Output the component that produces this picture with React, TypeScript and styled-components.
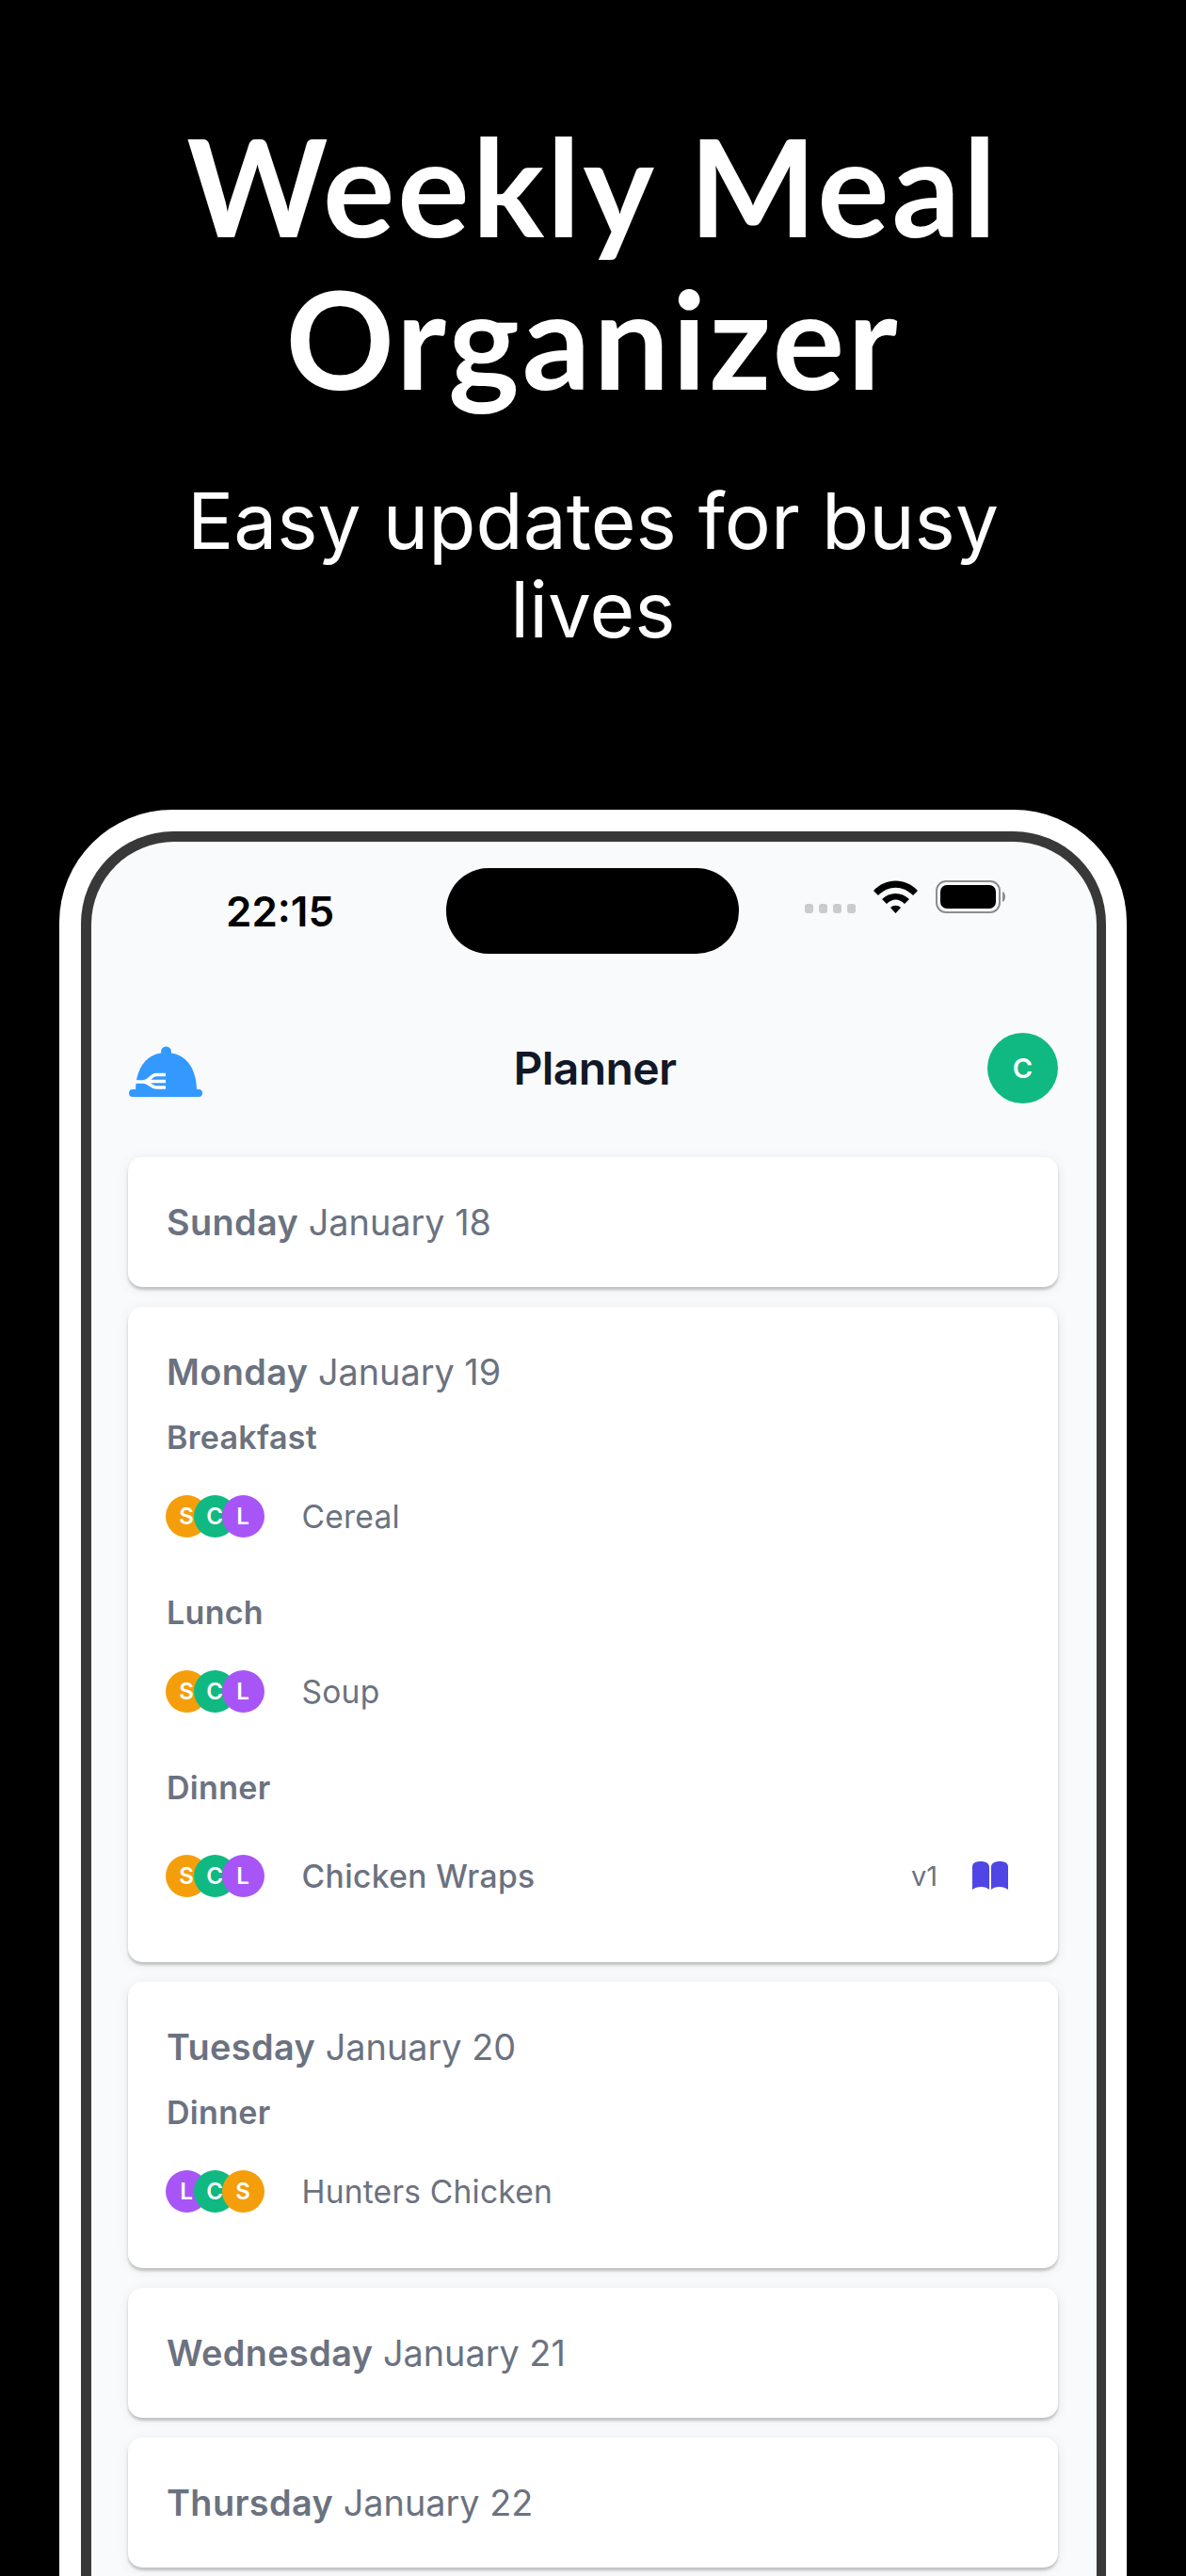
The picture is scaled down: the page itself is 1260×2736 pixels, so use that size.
import styled, { createGlobalStyle } from "styled-components";

const GlobalStyle = createGlobalStyle`
    html, body {
        margin: 0;
        padding: 0;
        background: #000;
    }
`;

const STPage = styled.div`
    width: 1260px;
    height: 2736px;
    overflow: hidden;
    background: #000;
    display: flex;
    flex-direction: column;
    align-items: center;
`;

const STHeadline = styled.h1`
    margin: 116px 0 0;
    width: 1000px;
    text-align: center;
    font-family: Lato, sans-serif;
    font-weight: 700;
    font-size: 143px;
    line-height: 162px;
    letter-spacing: 3px;
    color: #fff;
`;

const STSubline = styled.h2`
    margin: 67px 0 0;
    width: 900px;
    text-align: center;
    font-family: Inter, sans-serif;
    font-weight: 400;
    font-size: 82px;
    line-height: 94px;
    color: #fff;
`;

const STPhone = styled.div`
    width: 1134px;
    margin-top: 165px;
    flex-shrink: 0;
    padding: 23px 22px 0 23px;
    box-sizing: border-box;
    background: #fff;
    border-radius: 120px 120px 0 0;
`;

const STBezel = styled.div`
    padding: 11px 10px 0 11px;
    background: #383838;
    border-radius: 98px 98px 0 0;
`;

const STScreen = styled.div`
    background: #f9fafb;
    border-radius: 88px 88px 0 0;
    padding-bottom: 200px;
    font-family: Inter, sans-serif;
`;

const STStatusBar = styled.div`
    display: grid;
    grid-template-columns: 377px 311px 1fr;
    align-items: center;
    padding-top: 28px;
`;

const STTime = styled.span`
    padding-left: 143px;
    font-family: Inter, sans-serif;
    font-size: 44px;
    font-weight: 600;
    line-height: 50px;
    color: #000;
`;

const STIsland = styled.div`
    height: 91px;
    background: #000;
    border-radius: 45px;
`;

const STStatusIcons = styled.div`
    display: flex;
    justify-content: flex-end;
    align-items: flex-end;
    padding: 0 94px 30px 0;
`;

const STDots = styled.div`
    display: flex;
    gap: 6px;
    margin-right: 19px;
`;

const STDot = styled.span`
    width: 9px;
    height: 10px;
    border-radius: 3px;
    background: #cbcbcb;
`;

const STWifi = styled.svg`
    display: block;
    width: 47px;
    height: 35px;
    margin-right: 19px;
`;

const STBattery = styled.svg`
    display: block;
    width: 77px;
    height: 35px;
`;

const STTopBar = styled.div`
    display: flex;
    align-items: center;
    justify-content: space-between;
    height: 75px;
    margin: 84px 41px 57px 40px;
`;

const STLogo = styled.svg`
    display: block;
    width: 78px;
    height: 54px;
    margin-top: 6px;
`;

const STTopTitle = styled.span`
    font-size: 48px;
    font-weight: 600;
    letter-spacing: -0.6px;
    color: #111827;
`;

const STProfile = styled.div`
    width: 75px;
    height: 75px;
    border-radius: 50%;
    background: #10b981;
    color: #fff;
    display: flex;
    align-items: center;
    justify-content: center;
    font-size: 29px;
    font-weight: 600;
`;

const STCards = styled.div`
    display: flex;
    flex-direction: column;
    gap: 21px;
    margin: 0 41px 0 39px;
`;

const STCard = styled.div`
    background: #fff;
    border-radius: 15px;
    padding: 42px 42px 42px 41px;
    box-shadow: 0 3px 3px rgba(0, 0, 0, 0.2), 0 2px 14px rgba(0, 0, 0, 0.07);
`;

const STDayTitle = styled.div`
    font-size: 37.8px;
    line-height: 54px;
    font-weight: 400;
    color: #6b7280;
`;

const STDayName = styled.span`
    font-weight: 600;
    letter-spacing: 0.4px;
`;

const STMeal = styled.div`
    margin-top: 18px;
    & + & {
        margin-top: 38px;
    }
`;

const STMealLabel = styled.div`
    font-size: 34px;
    line-height: 50px;
    font-weight: 600;
    letter-spacing: 0.3px;
    color: #6b7280;
`;

const STMealRow = styled.div<{ $tall?: boolean }>`
    display: flex;
    align-items: center;
    height: ${p => (p.$tall ? 100 : 80)}px;
    margin: 18px 11px 0 -1.5px;
`;

const STAvatars = styled.div`
    display: flex;
    margin-right: 40px;
`;

const STAvatar = styled.span<{ $color: string }>`
    width: 45px;
    height: 45px;
    border-radius: 50%;
    background: ${p => p.$color};
    color: #fff;
    display: flex;
    align-items: center;
    justify-content: center;
    font-size: 24px;
    font-weight: 600;
    & + & {
        margin-left: -15px;
    }
`;

const STDish = styled.span<{ $link?: boolean }>`
    font-size: 33.6px;
    font-weight: ${p => (p.$link ? 500 : 400)};
    letter-spacing: ${p => (p.$link ? 0.4 : 0.2)}px;
    color: #6b7280;
`;

const STVersion = styled.span`
    margin-left: auto;
    margin-right: 37px;
    font-size: 29px;
    color: #6b7280;
`;

const STBook = styled.svg`
    display: block;
    width: 38px;
    height: 30px;
`;

const PEOPLE: Record<string, string> = {
    S: "#f59e0b",
    C: "#10b981",
    L: "#a855f7",
};

interface IMeal {
    label: string,
    people: string,
    dish: string,
    version?: string,
};

interface IDay {
    name: string,
    date: string,
    meals: IMeal[],
};

const DAYS: IDay[] = [
    { name: "Sunday", date: "January 18", meals: [] },
    {
        name: "Monday",
        date: "January 19",
        meals: [
            { label: "Breakfast", people: "SCL", dish: "Cereal" },
            { label: "Lunch", people: "SCL", dish: "Soup" },
            { label: "Dinner", people: "SCL", dish: "Chicken Wraps", version: "v1" },
        ],
    },
    {
        name: "Tuesday",
        date: "January 20",
        meals: [{ label: "Dinner", people: "LCS", dish: "Hunters Chicken" }],
    },
    { name: "Wednesday", date: "January 21", meals: [] },
    { name: "Thursday", date: "January 22", meals: [] },
];

const App = (): JSX.Element => {
    return <STPage>
        <GlobalStyle />
        <STHeadline>Weekly Meal Organizer</STHeadline>
        <STSubline>Easy updates for busy lives</STSubline>
        <STPhone>
            <STBezel>
                <STScreen>
                    <STStatusBar>
                        <STTime>22:15</STTime>
                        <STIsland />
                        <STStatusIcons>
                            <STDots>
                                {[0, 1, 2, 3].map(i => <STDot key={i} />)}
                            </STDots>
                            <STWifi viewBox="0 0 47 35">
                                <path d="M0 11 C13 -3 34 -3 47 11 L42 16 C31 5 16 5 5 16 Z" fill="#000" />
                                <path d="M9 20 C17 12 30 12 38 20 L33 25 C27 19 20 19 14 25 Z" fill="#000" />
                                <path d="M18 29 C21 26 26 26 29 29 L23.5 35 Z" fill="#000" />
                            </STWifi>
                            <STBattery viewBox="0 0 77 35">
                                <rect x="1" y="1" width="67" height="33" rx="10" fill="none" stroke="#8e8e8e" strokeWidth="2" />
                                <rect x="5" y="5" width="59" height="25" rx="7" fill="#000" />
                                <path d="M71 12 C75 13 75 22 71 23 Z" fill="#8e8e8e" />
                            </STBattery>
                        </STStatusIcons>
                    </STStatusBar>
                    <STTopBar>
                        <STLogo viewBox="0 0 78 54">
                            <circle cx="39.5" cy="6" r="5.5" fill="#3399ff" />
                            <path d="M7 48 C7 22 20 7 39.5 7 C59 7 72 22 72 48 Z" fill="#3399ff" />
                            <rect x="0" y="46" width="78" height="8" rx="4" fill="#3399ff" />
                            <path d="M39 30.5 H29 C23 30.5 22 38 15 38 H5 M39 37.5 H18 M39 44 H29 C23 44 22 38 15 38" fill="none" stroke="#fff" strokeWidth="3.6" />
                        </STLogo>
                        <STTopTitle>Planner</STTopTitle>
                        <STProfile>C</STProfile>
                    </STTopBar>
                    <STCards>
                        {DAYS.map(day => (
                            <STCard key={day.name}>
                                <STDayTitle>
                                    <STDayName>{day.name}</STDayName> {day.date}
                                </STDayTitle>
                                {day.meals.map(meal => (
                                    <STMeal key={meal.label}>
                                        <STMealLabel>{meal.label}</STMealLabel>
                                        <STMealRow $tall={!!meal.version}>
                                            <STAvatars>
                                                {meal.people.split("").map(p => (
                                                    <STAvatar key={p} $color={PEOPLE[p]}>{p}</STAvatar>
                                                ))}
                                            </STAvatars>
                                            <STDish $link={!!meal.version}>{meal.dish}</STDish>
                                            {meal.version && <>
                                                <STVersion>{meal.version}</STVersion>
                                                <STBook viewBox="0 0 38 30">
                                                    <path d="M0 6 C0 2 3 0 9 0 C14 0 18 2 18 6 V30 C14 26 5 26 0 30 Z" fill="#4f46e5" />
                                                    <path d="M20 6 C20 2 24 0 29 0 C35 0 38 2 38 6 V30 C33 26 24 26 20 30 Z" fill="#4f46e5" />
                                                </STBook>
                                            </>}
                                        </STMealRow>
                                    </STMeal>
                                ))}
                            </STCard>
                        ))}
                    </STCards>
                </STScreen>
            </STBezel>
        </STPhone>
    </STPage>
};

export default App;
